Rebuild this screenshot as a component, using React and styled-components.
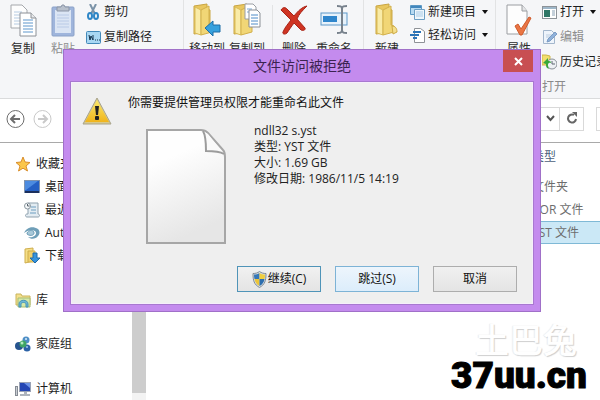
import React from "react";
import styled, { createGlobalStyle, css } from "styled-components";

const GlobalStyle = createGlobalStyle`
  * {
    box-sizing: border-box;
  }
  body {
    margin: 0;
    background: #fff;
    color: #1e1e1e;
    font-family: "Open Sans", "Noto Sans CJK SC", sans-serif;
    font-size: 12px;
    line-height: 16px;
  }
  button {
    font: inherit;
    color: inherit;
    white-space: nowrap;
  }
  svg {
    display: block;
    flex: none;
  }
`;

const Page = styled.div`
  position: relative;
  display: flex;
  flex-direction: column;
  height: 100vh;
  min-height: 400px;
  overflow: hidden;
`;

/* ribbon */

const Ribbon = styled.div`
  display: flex;
  height: 99px;
  flex: none;
  background: #f5f6f8;
  border-bottom: 1px solid #dadbdc;
`;

const Group = styled.div`
  display: flex;
  align-items: flex-start;
  flex: ${({ $width }) => ($width ? `0 0 ${$width}px` : "1 0 0")};
  padding-left: 3px;
  border-right: ${({ $width }) => ($width ? "1px solid #e2e3e4" : "none")};
`;

const Divider = styled.div`
  width: 1px;
  height: 76px;
  margin: 5px 1px 0 5px;
  background: #e2e3e4;
`;

const LargeButton = styled.button`
  display: flex;
  flex-direction: column;
  align-items: center;
  justify-content: flex-end;
  gap: 4px;
  width: 40px;
  height: 57px;
  padding: 0;
  border: none;
  background: none;
  color: ${({ $muted }) => ($muted ? "#8e8e8e" : "#2b2b2b")};
`;

const SmallColumn = styled.div`
  display: flex;
  flex-direction: column;
  align-items: flex-start;
  gap: ${({ $gap }) => $gap}px;
  padding: 4px 0 0 3px;
`;

const SmallButton = styled.button`
  display: flex;
  align-items: center;
  gap: 3px;
  padding: 0;
  border: none;
  background: none;
  color: ${({ $muted }) => ($muted ? "#8e8e8e" : "#1e1e1e")};
`;

const Caret = styled.span`
  margin-left: 3px;
  border: 3px solid transparent;
  border-top: 4px solid #111;
  border-bottom: none;
`;

const GroupLabel = styled.div`
  color: #8a8a8a;
`;

/* navigation */

const NavBar = styled.nav`
  display: grid;
  grid-template-columns: 18px 18px 1fr 4px;
  align-items: center;
  column-gap: 9px;
  height: 44px;
  flex: none;
  padding: 0 0 4px 6px;
  background: #fff;
  border-bottom: 1px solid #a9a9a9;
`;

const RoundButton = styled.button`
  padding: 0;
  border: none;
  background: none;
`;

const Address = styled.div`
  display: flex;
  align-items: stretch;
  justify-content: flex-end;
  height: 24px;
  margin: 0 3px 0 26px;
  border: 1px solid #d9d9d9;
`;

const AddressButton = styled.button`
  display: flex;
  align-items: center;
  justify-content: center;
  width: ${({ $split }) => ($split ? 24 : 18)}px;
  padding: 0;
  border: none;
  border-left: ${({ $split }) => ($split ? "1px solid #d9d9d9" : "none")};
  background: none;
`;

const SearchEdge = styled.div`
  height: 24px;
  border: 1px solid #d9d9d9;
  border-right: none;
`;

/* explorer body */

const Explorer = styled.div`
  display: grid;
  grid-template-columns: 132px 14px 1fr;
  flex: 1;
  min-height: 0;
`;

const Sidebar = styled.aside`
  display: flex;
  flex-direction: column;
  gap: 22px;
  padding: 9px 0 0 15px;
  overflow: hidden;
`;

const TreeItem = styled.a`
  display: flex;
  align-items: center;
  gap: 5px;
  height: 23px;
  padding-left: ${({ $nested }) => ($nested ? 9 : 0)}px;
  color: #1e1e1e;
  text-decoration: none;
  white-space: nowrap;
`;

const ScrollTrack = styled.div`
  padding-bottom: 7px;
  background: #f3f3f3;
`;

const ScrollThumb = styled.div`
  height: 100%;
  background: #cdcdcd;
`;

const FileTable = styled.table`
  width: 100%;
  align-self: start;
  table-layout: fixed;
  border-collapse: collapse;
  color: #6d6d6d;

  th {
    height: 32px;
    padding: 0 0 4px;
    color: #4c607a;
    font-weight: 400;
    text-align: left;
  }
  td {
    height: 23px;
    padding: 0;
  }
`;

const TypeCol = styled.col`
  width: 68px;
`;

const FileRow = styled.tr`
  ${({ $selected }) =>
    $selected &&
    css`
      background: #cbe8f6;
      box-shadow: inset 0 1px #7fb9d6, inset 0 -1px #7fb9d6;
    `}
`;

/* dialog */

const Dialog = styled.section`
  position: absolute;
  top: 49px;
  left: 63px;
  right: 59px;
  padding: 0 7px 7px;
  background: #c48bee;
  border: 1px solid #a070c8;
`;

const TitleBar = styled.header`
  display: grid;
  grid-template-columns: 30px 1fr 30px;
  align-items: start;
  height: 32px;
`;

const Title = styled.h1`
  grid-column: 2;
  margin: 0;
  color: #3b2350;
  font-size: 14px;
  font-weight: 400;
  line-height: 32px;
  text-align: center;
`;

const CloseButton = styled.button`
  display: flex;
  align-items: center;
  justify-content: center;
  height: 22px;
  padding: 0;
  border: none;
  background: #c84f52;
`;

const DialogBody = styled.div`
  display: grid;
  grid-template-columns: 30px 1fr;
  column-gap: 16px;
  padding: 12px 15px 11px 10px;
  background: #efefef;
  border: 1px solid #f6eefb;
  outline: 1px solid #a878d0;
`;

const Sign = styled.div`
  grid-row: 1 / span 2;
`;

const Message = styled.p`
  margin: 0;
  color: #111;
`;

const Details = styled.div`
  grid-column: 2;
  display: flex;
  gap: 28px;
  padding: 12px 0 0 18px;
  color: #222;
`;

const Preview = styled.div`
  padding-top: 6px;
`;

const Lines = styled.div`
  white-space: nowrap;
`;

const Actions = styled.div`
  grid-column: 1 / -1;
  display: flex;
  justify-content: flex-end;
  gap: 14px;
  padding-top: 22px;
`;

const tones = {
  primary: css`
    border-color: #4f94b8;
    background: linear-gradient(#f1f1f1, #e4e4e4);
  `,
  hover: css`
    border-color: #7db3d6;
    background: linear-gradient(#edf5fc, #dcedfb);
  `,
  plain: css`
    border-color: #adadad;
    background: linear-gradient(#f0f0f0, #e4e4e4);
  `,
};

const ActionButton = styled.button`
  display: flex;
  align-items: center;
  justify-content: center;
  gap: 1px;
  width: 84px;
  height: 26px;
  padding: 0;
  border: 1px solid;
  color: #111;
  ${({ $tone }) => tones[$tone]}
`;

/* marks in the lower right corner */

const Marks = styled.div`
  position: absolute;
  right: 13px;
  bottom: 5px;
  display: flex;
  flex-direction: column;
  align-items: flex-end;
`;

const Watermark = styled.div`
  margin-right: 10px;
  color: #fff;
  font-size: 34px;
  line-height: 34px;
  font-weight: 500;
  text-shadow: 1px 1px 1px #cfcfcf, -1px 0 1px #ececec;
`;

const SiteName = styled.div`
  color: #000;
  font-family: Roboto, "Liberation Sans", sans-serif;
  font-size: 37px;
  line-height: 38px;
  font-weight: 900;
  -webkit-text-stroke: 1px #000;
`;

/* icons */

const CopyIcon = () => (
  <svg width="27" height="33" viewBox="0 0 27 33">
    <path d="M1 1h11l5 5v18H1z" fill="#fdfdfd" stroke="#a5a8ac" />
    <path d="M4 8h8M4 11h6M4 14h6M4 17h6M4 20h6" stroke="#b5cbe2" />
    <path d="M10 9h11l5 5v18H10z" fill="#fff" stroke="#8c9096" />
    <path d="M21 9v5h5" fill="#e6e8ea" stroke="#8c9096" />
    <path d="M13 16h10M13 19h10M13 22h10M13 25h10M13 28h10" stroke="#5f97cc" />
  </svg>
);

const PasteIcon = () => (
  <svg width="24" height="33" viewBox="0 0 24 33">
    <rect x="1" y="3" width="22" height="29" rx="1" fill="#9fb5dc" stroke="#8ba1c8" />
    <rect x="4" y="6" width="16" height="23" fill="#dbe5f4" />
    <path d="M6 11h12M6 14h12M6 17h12M6 20h12M6 23h12" stroke="#b9cae6" />
    <path d="M6 3h4l1-2h2l1 2h4v4H6z" fill="#b8c0cc" stroke="#8b95a6" />
  </svg>
);

const FolderShape = () => (
  <>
    <path d="M1 3l13-2v5l3 1v22L1 31z" fill="#e9c75f" stroke="#c9a542" />
    <path d="M2 4l6 3v25l-6-2z" fill="#f9eba7" stroke="#d9bb58" />
    <path d="M8 7l8-4v19l3 1v6l-11 3z" fill="#f1d676" stroke="#d2b04c" />
  </>
);

const MoveToIcon = () => (
  <svg width="28" height="34" viewBox="0 0 28 34">
    <FolderShape />
    <path d="M12 25l8-7v4h7v7h-7v4z" fill="#36a0dd" stroke="#1c6da6" />
  </svg>
);

const CopyToIcon = () => (
  <svg width="28" height="34" viewBox="0 0 28 34">
    <FolderShape />
    <path d="M12 1h8l3 3v12H12z" fill="#fff" stroke="#9a9ea4" />
    <path d="M14 6h5M14 9h5" stroke="#79a9d8" />
    <path d="M16 7h8l3 3v14H16z" fill="#fff" stroke="#8b8f95" />
    <path d="M18 12h7M18 15h7M18 18h7M18 21h7" stroke="#4f8cc8" />
  </svg>
);

const NewFolderIcon = () => (
  <svg width="24" height="34" viewBox="0 0 24 34">
    <FolderShape />
    <path d="M17 23c3 0 5 2 5 6l-4 2z" fill="#f4df8d" stroke="#cdaa45" />
  </svg>
);

const DeleteIcon = () => (
  <svg width="28" height="32" viewBox="0 0 28 32">
    <path
      d="M1 5C3 2 5 2 7 4l7 7C18 6 22 2 27 1c-5 5-8 8-10 13l8 9c1 2-2 3-4 2l-7-7c-3 4-5 7-7 10-2 2-5 1-4-1 2-5 5-8 8-12z"
      fill="#cf3423"
      stroke="#a82518"
    />
  </svg>
);

const RenameIcon = () => (
  <svg width="28" height="33" viewBox="0 0 28 33">
    <rect x="1" y="9" width="26" height="12" fill="#e7f2fb" stroke="#5c98c9" />
    <rect x="3" y="12" width="14" height="6" fill="#2f86cc" />
    <path d="M17 2c3 0 5 0 5 3v21c0 3-2 3-5 3M27 2c-3 0-5 0-5 3v21c0 3 2 3 5 3" fill="none" stroke="#77818c" strokeWidth="2" />
  </svg>
);

const PropertiesIcon = () => (
  <svg width="26" height="34" viewBox="0 0 26 34">
    <path d="M1 2h15l5 6v23H1z" fill="#fdfdfd" stroke="#9b9ea2" />
    <path d="M16 2v6h5" fill="#e4e5e7" stroke="#9b9ea2" />
    <path d="M9 23l3-2 3 5 8-12 2 1-9 17h-2z" fill="#ea7544" stroke="#cf5a2a" />
  </svg>
);

const ScissorsIcon = () => (
  <svg width="15" height="16" viewBox="0 0 15 16">
    <path d="M4 0l5 10M10 0L5 10" stroke="#7b93a8" strokeWidth="2" />
    <ellipse cx="4" cy="12" rx="2" ry="3" fill="none" stroke="#2f86c6" strokeWidth="2" />
    <ellipse cx="10" cy="12" rx="2" ry="3" fill="none" stroke="#2f86c6" strokeWidth="2" />
  </svg>
);

const PathIcon = () => (
  <svg width="15" height="13" viewBox="0 0 15 13">
    <rect x="0.5" y="0.5" width="14" height="12" rx="1" fill="#a8d7f3" stroke="#4389b9" />
    <path d="M3 4l1 5 1-4 2 4V4" fill="none" stroke="#12324c" />
    <path d="M9 9h1M11 9h1M13 9h1" stroke="#12324c" />
  </svg>
);

const NewItemIcon = () => (
  <svg width="15" height="16" viewBox="0 0 15 16">
    <path d="M0.500 1.500h11v9h-11z" fill="#b7daf2" stroke="#5c98c4" />
    <path d="M1 3h10" stroke="#4186bd" strokeWidth="2" />
    <path d="M4.500 5.500h10v10h-10z" fill="#eef6fc" stroke="#6d9fc4" />
    <path d="M6 8h7M6 10h7M6 12h7" stroke="#a9cbe6" />
  </svg>
);

const EasyAccessIcon = () => (
  <svg width="15" height="16" viewBox="0 0 15 16">
    <path d="M4.500 1.500h6l4 3v11h-10z" fill="#fff" stroke="#8e9297" />
    <path d="M3 5h8M0 8h9M3 11h4" stroke="#2c74b8" strokeWidth="2" />
  </svg>
);

const OpenIcon = () => (
  <svg width="15" height="14" viewBox="0 0 15 14">
    <rect x="0.500" y="1.500" width="14" height="12" fill="#fff" stroke="#8d9399" />
    <path d="M1 3h13" stroke="#9eb7c9" strokeWidth="2" />
    <rect x="2" y="5" width="6" height="7" fill="#2f7767" />
    <path d="M10 6h3M10 8h3M10 10h3" stroke="#8aa1b5" />
  </svg>
);

const EditIcon = () => (
  <svg width="15" height="16" viewBox="0 0 15 16">
    <path d="M1.500 1.500h8l3 3v10h-11z" fill="#eef4fb" stroke="#a3b6cc" />
    <path d="M4 6h6M4 8h5" stroke="#bccde0" />
    <path d="M5 13l1-3 7-7 2 2-7 7z" fill="#8fb1da" stroke="#7c9cc4" />
  </svg>
);

const HistoryIcon = () => (
  <svg width="15" height="16" viewBox="0 0 15 16">
    <path d="M0 1h4l4 1v9H0z" fill="#f2df6c" stroke="#cdb649" />
    <circle cx="10" cy="10" r="5" fill="#eef1f4" stroke="#8a9097" />
    <path d="M10 7v3h3" fill="none" stroke="#5c6670" />
    <path d="M1 9l5-5v3c3 0 3 1 3 2-3-1-4 2-2 6-3-1-3-3-3-5z" fill="#39a83a" />
  </svg>
);

const ArrowCircle = ({ flip, color }) => (
  <svg width="19" height="20" viewBox="0 0 19 20">
    <circle cx="9.500" cy="10" r="8.500" fill="none" stroke={color} />
    <path
      d={flip ? "M5 10h9M10 6l4 4-4 4" : "M14 10H5M9 6l-4 4 4 4"}
      fill="none"
      stroke={color}
      strokeWidth="2"
    />
  </svg>
);

const ChevronIcon = () => (
  <svg width="9" height="7" viewBox="0 0 9 7">
    <path d="M1 1l3.500 4L8 1" fill="none" stroke="#555" strokeWidth="2" />
  </svg>
);

const RefreshIcon = () => (
  <svg width="12" height="13" viewBox="0 0 12 13">
    <path d="M8 3a4 4 0 1 0 2 4" fill="none" stroke="#666" strokeWidth="2" />
    <path d="M6 0h5v5z" fill="#666" />
  </svg>
);

const StarIcon = () => (
  <svg width="16" height="16" viewBox="0 0 16 16">
    <path
      d="M8 1l2 5 5 .5-4 3.500 1.500 5L8 12.200 3.500 15 5 10 1 6.500 6 6z"
      fill="#fbc64a"
      stroke="#d98e2c"
    />
  </svg>
);

const DesktopIcon = () => (
  <svg width="16" height="14" viewBox="0 0 16 14">
    <rect x="0.500" y="0.500" width="15" height="12" fill="#2560c4" stroke="#8093ad" />
    <path d="M1 1h13L2 10H1z" fill="#4c8be0" />
    <path d="M1 12h14" stroke="#1b2f5c" strokeWidth="2" />
  </svg>
);

const RecentIcon = () => (
  <svg width="16" height="16" viewBox="0 0 16 16">
    <path d="M4 1h10v11c2 0 2 3 0 3H3c-2 0-2-3 0-3h1z" fill="#e3ecf2" stroke="#8fa1ae" />
    <path d="M7 5h5M7 8h5M6 11h6" stroke="#6d9dc0" />
    <circle cx="3.500" cy="4" r="3" fill="#f5f8fa" stroke="#8b979f" />
    <path d="M3.500 2v2h2" fill="none" stroke="#55616b" />
  </svg>
);

const AutodeskIcon = () => (
  <svg width="16" height="14" viewBox="0 0 16 14">
    <path d="M0 7c2-5 8-8 14-4 2 2 2 5 0 7-2 3-7 4-10 1 4 1 8-1 8-4S6 3 0 7z" fill="#6f9fb8" />
    <path d="M3 8c0-4 7-5 7-1 0 3-5 3-7 1z" fill="#a9c9d9" stroke="#6b9cb6" />
  </svg>
);

const DownloadIcon = () => (
  <svg width="16" height="17" viewBox="0 0 16 17">
    <path d="M1 2l8-1v13l-8 2z" fill="#f5df88" stroke="#cfae4d" />
    <path d="M4 4h7v11H4z" fill="#efd06d" stroke="#cfae4d" />
    <path d="M9 6h4v5h3l-5 5-5-5h3z" fill="#3593dc" stroke="#1f6aa8" />
  </svg>
);

const LibraryIcon = () => (
  <svg width="16" height="16" viewBox="0 0 16 16">
    <path d="M1 2h5l1 2h8v9H1z" fill="#f4e08c" stroke="#c9b45c" />
    <path d="M3 6h12v9H3z" fill="#d7e9a8" stroke="#a8bd76" />
    <path d="M4 15v-3c0-5 9-5 9 0v3h-2v-3c0-2-5-2-5 0v3z" fill="#6db8d8" stroke="#4593b5" />
  </svg>
);

const HomegroupIcon = () => (
  <svg width="16" height="16" viewBox="0 0 16 16">
    <circle cx="4" cy="10" r="4" fill="#27548f" />
    <circle cx="11" cy="4" r="3.500" fill="#4f8fc6" />
    <circle cx="12" cy="12" r="3.500" fill="#2b62a6" />
    <circle cx="8" cy="8" r="3.500" fill="#3fa564" />
    <circle cx="7" cy="7" r="1.500" fill="#b4ebc0" />
    <circle cx="11" cy="3" r="1" fill="#d7ecfa" />
    <circle cx="12" cy="11" r="1" fill="#9cc4ec" />
  </svg>
);

const ComputerIcon = () => (
  <svg width="16" height="16" viewBox="0 0 16 16">
    <rect x="0.500" y="5.500" width="2" height="9" fill="#c9cdd3" stroke="#858b94" />
    <rect x="4.500" y="1.500" width="11" height="9" fill="#2446b4" stroke="#9aa2b5" />
    <path d="M9 2h6v5z" fill="#6d93e6" />
    <path d="M9 11h3v2h3v2H5v-2h4z" fill="#aeb4bd" />
  </svg>
);

const WarningIcon = () => (
  <svg width="30" height="30" viewBox="0 0 30 30">
    <defs>
      <linearGradient id="warn" x1="0" y1="0" x2="0" y2="1">
        <stop offset="0" stopColor="#fbe96a" />
        <stop offset="1" stopColor="#f0b41c" />
      </linearGradient>
    </defs>
    <path d="M15 3L29 29H1z" fill="#d9c98a" stroke="#a9a48c" strokeLinejoin="round" />
    <path d="M15 5l12 22H3z" fill="url(#warn)" />
    <path d="M13 11h4l-1 9h-2z" fill="#222" />
    <rect x="13" y="21" width="4" height="4" rx="1" fill="#222" />
  </svg>
);

const DocumentIcon = () => (
  <svg width="80" height="115" viewBox="0 0 80 115">
    <defs>
      <linearGradient id="paper" x1="0" y1="0" x2="0.300" y2="1">
        <stop offset="0.300" stopColor="#fefefe" />
        <stop offset="1" stopColor="#e6e6e6" />
      </linearGradient>
    </defs>
    <path d="M1 1h54c3 0 5 1 7 3l15 17c2 2 2 4 2 7v86H1z" fill="url(#paper)" stroke="#a6a6a6" strokeWidth="2" />
    <path d="M57 2c3 5 3 12 3 20 7 0 13 0 18 3L62 5z" fill="#fafafa" />
    <path d="M57 2c3 5 3 12 3 20 7 0 13 0 18 3" fill="none" stroke="#9c9c9c" strokeWidth="2" />
  </svg>
);

const ShieldIcon = () => (
  <svg width="15" height="17" viewBox="0 0 15 17">
    <path d="M7.500 0.500c2 1.500 4 2 6.500 2 0 7-1 11-6.500 14C2 13.500 1 9.500 1 2.500c2.500 0 4.500-.5 6.500-2z" fill="#d8dde2" stroke="#7f8b96" />
    <path d="M7.500 2v6H2.500c-.5-1.500-.5-3-.5-4.500 2 0 4-.5 5.500-1.500z" fill="#3577b8" />
    <path d="M7.500 2v6h5c.5-1.500.5-3 .5-4.500-2 0-4-.5-5.500-1.500z" fill="#f0ce3e" />
    <path d="M2.500 8h5v7c-3-1.500-4.500-4-5-7z" fill="#ecc53a" />
    <path d="M12.500 8h-5v7c3-1.500 4.500-4 5-7z" fill="#2d6eae" />
  </svg>
);

const CloseIcon = () => (
  <svg width="9" height="9" viewBox="0 0 9 9">
    <path d="M1 1l7 7M8 1L1 8" stroke="#fff" strokeWidth="2" />
  </svg>
);

const favorites = [
  { label: "桌面", Icon: DesktopIcon },
  { label: "最近访问", Icon: RecentIcon },
  { label: "Autodesk", Icon: AutodeskIcon },
  { label: "下载", Icon: DownloadIcon },
];

const places = [
  { label: "库", Icon: LibraryIcon },
  { label: "家庭组", Icon: HomegroupIcon },
  { label: "计算机", Icon: ComputerIcon },
];

const files = [
  { type: "文件夹" },
  { type: "COR 文件" },
  { type: "YST 文件", selected: true },
];

function RibbonBar() {
  return (
    <Ribbon>
      <Group $width={184}>
        <LargeButton><CopyIcon />复制</LargeButton>
        <LargeButton $muted><PasteIcon />粘贴</LargeButton>
        <SmallColumn $gap={9}>
          <SmallButton><ScissorsIcon />剪切</SmallButton>
          <SmallButton><PathIcon />复制路径</SmallButton>
        </SmallColumn>
      </Group>
      <Group $width={180}>
        <LargeButton><MoveToIcon />移动到</LargeButton>
        <LargeButton><CopyToIcon />复制到</LargeButton>
        <Divider />
        <LargeButton><DeleteIcon />删除</LargeButton>
        <LargeButton><RenameIcon />重命名</LargeButton>
      </Group>
      <Group $width={132}>
        <LargeButton><NewFolderIcon />新建</LargeButton>
        <SmallColumn $gap={7}>
          <SmallButton><NewItemIcon />新建项目<Caret /></SmallButton>
          <SmallButton><EasyAccessIcon />轻松访问<Caret /></SmallButton>
        </SmallColumn>
      </Group>
      <Group>
        <LargeButton><PropertiesIcon />属性</LargeButton>
        <SmallColumn $gap={9}>
          <SmallButton><OpenIcon />打开<Caret /></SmallButton>
          <SmallButton $muted><EditIcon />编辑</SmallButton>
          <SmallButton><HistoryIcon />历史记录</SmallButton>
          <GroupLabel>打开</GroupLabel>
        </SmallColumn>
      </Group>
    </Ribbon>
  );
}

function AccessDialog() {
  return (
    <Dialog role="dialog" aria-labelledby="dialog-title">
      <TitleBar>
        <Title id="dialog-title">文件访问被拒绝</Title>
        <CloseButton aria-label="关闭"><CloseIcon /></CloseButton>
      </TitleBar>
      <DialogBody>
        <Sign><WarningIcon /></Sign>
        <Message>你需要提供管理员权限才能重命名此文件</Message>
        <Details>
          <Preview><DocumentIcon /></Preview>
          <Lines>
            <div>ndll32 s.yst</div>
            <div>类型: YST 文件</div>
            <div>大小: 1.69 GB</div>
            <div>修改日期: 1986/11/5 14:19</div>
          </Lines>
        </Details>
        <Actions>
          <ActionButton $tone="primary"><ShieldIcon />继续(C)</ActionButton>
          <ActionButton $tone="hover">跳过(S)</ActionButton>
          <ActionButton $tone="plain">取消</ActionButton>
        </Actions>
      </DialogBody>
    </Dialog>
  );
}

function App() {
  return (
    <Page>
      <GlobalStyle />
      <RibbonBar />
      <NavBar>
        <RoundButton aria-label="后退"><ArrowCircle color="#6e6e6e" /></RoundButton>
        <RoundButton aria-label="前进"><ArrowCircle flip color="#c9c9c9" /></RoundButton>
        <Address>
          <AddressButton aria-label="展开"><ChevronIcon /></AddressButton>
          <AddressButton $split aria-label="刷新"><RefreshIcon /></AddressButton>
        </Address>
        <SearchEdge />
      </NavBar>
      <Explorer>
        <Sidebar>
          <div>
            <TreeItem href="#favorites"><StarIcon />收藏夹</TreeItem>
            {favorites.map(({ label, Icon }) => (
              <TreeItem key={label} href="#favorites" $nested>
                <Icon />
                {label}
              </TreeItem>
            ))}
          </div>
          {places.map(({ label, Icon }) => (
            <TreeItem key={label} href="#places">
              <Icon />
              {label}
            </TreeItem>
          ))}
        </Sidebar>
        <ScrollTrack>
          <ScrollThumb />
        </ScrollTrack>
        <FileTable>
          <colgroup>
            <col />
            <TypeCol />
          </colgroup>
          <thead>
            <tr>
              <th />
              <th scope="col">类型</th>
            </tr>
          </thead>
          <tbody>
            {files.map(({ type, selected }) => (
              <FileRow key={type} $selected={selected}>
                <td />
                <td>{type}</td>
              </FileRow>
            ))}
          </tbody>
        </FileTable>
      </Explorer>
      <Marks>
        <Watermark>土巴兔</Watermark>
        <SiteName>37uu.cn</SiteName>
      </Marks>
      <AccessDialog />
    </Page>
  );
}

export default App;
